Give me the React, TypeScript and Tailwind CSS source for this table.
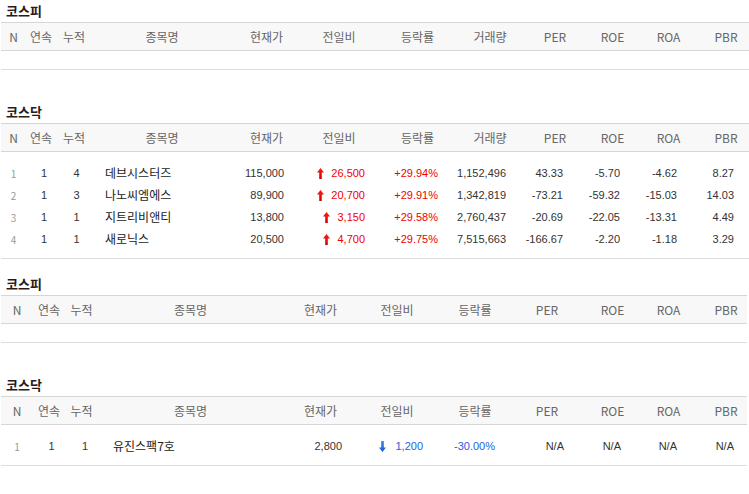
import type { ReactNode } from 'react';

type Stock = {
  n: number;
  streak: number;
  total: number;
  name: string;
  price: string;
  dir: 'up' | 'down';
  diff: string;
  rate: string;
  volume?: string;
  per: string;
  roe: string;
  roa: string;
  pbr: string;
};

type Col = {
  label: string;
  head: string;
  cell: string;
  render: (s: Stock) => ReactNode;
};

const num = "font-['Liberation_Sans',sans-serif] text-[11px]";

function UpArrow() {
  return (
    <svg width="7" height="11" viewBox="0 0 7 11" className="shrink-0">
      <defs>
        <linearGradient id="upg" x1="0" y1="0" x2="0" y2="1">
          <stop offset="0" stopColor="#ff1a1a" />
          <stop offset="1" stopColor="#d10000" />
        </linearGradient>
      </defs>
      <path d="M3.5 0 L7 4.5 H4.8 V11 H2.2 V4.5 H0 Z" fill="url(#upg)" />
    </svg>
  );
}

function DownArrow() {
  return (
    <svg width="7" height="11" viewBox="0 0 7 11" className="shrink-0">
      <defs>
        <linearGradient id="dng" x1="0" y1="0" x2="0" y2="1">
          <stop offset="0" stopColor="#3d86f0" />
          <stop offset="1" stopColor="#1558d0" />
        </linearGradient>
      </defs>
      <path d="M3.5 11 L7 6.5 H4.8 V0 H2.2 V6.5 H0 Z" fill="url(#dng)" />
    </svg>
  );
}

function Diff({ s }: { s: Stock }) {
  const up = s.dir === 'up';
  return (
    <span className={`inline-flex items-center ${up ? 'gap-[7px] text-[#f00000]' : 'gap-[9px] text-[#1a5fe0]'}`}>
      {up ? <UpArrow /> : <DownArrow />}
      <span className={num}>{s.diff}</span>
    </span>
  );
}

const rateColor = (s: Stock) => (s.dir === 'up' ? 'text-[#f00000]' : 'text-[#1a5fe0]');

const fullCols: Col[] = [
  { label: 'N', head: 'text-center', cell: 'justify-center', render: (s) => <span className="text-[10px] text-[#999]">{s.n}</span> },
  { label: '연속', head: 'text-center', cell: 'justify-center pl-[6px]', render: (s) => <span className={num}>{s.streak}</span> },
  { label: '누적', head: 'text-center', cell: 'justify-center pl-[5px]', render: (s) => <span className={num}>{s.total}</span> },
  { label: '종목명', head: 'text-center', cell: 'justify-start pl-[13px]', render: (s) => <span className="text-[12px] text-[#222]">{s.name}</span> },
  { label: '현재가', head: 'text-center', cell: 'justify-end pr-[17px]', render: (s) => <span className={num}>{s.price}</span> },
  { label: '전일비', head: 'text-center', cell: 'justify-end pr-[12px]', render: (s) => <Diff s={s} /> },
  { label: '등락률', head: 'text-center', cell: 'justify-end pr-[20px]', render: (s) => <span className={`${num} ${rateColor(s)}`}>{s.rate}</span> },
  { label: '거래량', head: 'text-center', cell: 'justify-end pr-[16px]', render: (s) => <span className={num}>{s.volume}</span> },
  { label: 'PER', head: 'text-center', cell: 'justify-end pr-[25px]', render: (s) => <span className={num}>{s.per}</span> },
  { label: 'ROE', head: 'text-center', cell: 'justify-end pr-[17px]', render: (s) => <span className={num}>{s.roe}</span> },
  { label: 'ROA', head: 'text-center', cell: 'justify-end pr-[23px]', render: (s) => <span className={num}>{s.roa}</span> },
  { label: 'PBR', head: 'text-center pl-[3px]', cell: 'justify-end pr-[15px]', render: (s) => <span className={num}>{s.pbr}</span> },
];

const shortCols: Col[] = [
  { label: 'N', head: 'text-center', cell: 'justify-center', render: (s) => <span className="text-[10px] text-[#999]">{s.n}</span> },
  { label: '연속', head: 'text-center', cell: 'justify-center pl-[5px]', render: (s) => <span className={num}>{s.streak}</span> },
  { label: '누적', head: 'text-center', cell: 'justify-center pl-[7px]', render: (s) => <span className={num}>{s.total}</span> },
  { label: '종목명', head: 'text-center', cell: 'justify-start pl-[15px]', render: (s) => <span className="text-[12px] text-[#222]">{s.name}</span> },
  { label: '현재가', head: 'text-center', cell: 'justify-end pr-[16px]', render: (s) => <span className={num}>{s.price}</span> },
  { label: '전일비', head: 'text-center', cell: 'justify-end pr-[13px]', render: (s) => <Diff s={s} /> },
  { label: '등락률', head: 'text-center', cell: 'justify-end pr-[19px]', render: (s) => <span className={`${num} ${rateColor(s)}`}>{s.rate}</span> },
  { label: 'PER', head: 'text-center', cell: 'justify-end pr-[16px]', render: (s) => <span className={num}>{s.per}</span> },
  { label: 'ROE', head: 'text-center', cell: 'justify-end pr-[24px]', render: (s) => <span className={num}>{s.roe}</span> },
  { label: 'ROA', head: 'text-center', cell: 'justify-end pr-[15px]', render: (s) => <span className={num}>{s.roa}</span> },
  { label: 'PBR', head: 'text-center pl-[13px]', cell: 'justify-end pr-[13px]', render: (s) => <span className={num}>{s.pbr}</span> },
];

const fullGrid = 'grid-cols-[25px_30px_36px_140px_69px_76px_81px_64px_66px_49px_63px_49px]';
const shortGrid = 'grid-cols-[32px_32px_33px_185px_75px_78px_78px_66px_65px_47px_55px]';

const kosdaqUp: Stock[] = [
  { n: 1, streak: 1, total: 4, name: '데브시스터즈', price: '115,000', dir: 'up', diff: '26,500', rate: '+29.94%', volume: '1,152,496', per: '43.33', roe: '-5.70', roa: '-4.62', pbr: '8.27' },
  { n: 2, streak: 1, total: 3, name: '나노씨엠에스', price: '89,900', dir: 'up', diff: '20,700', rate: '+29.91%', volume: '1,342,819', per: '-73.21', roe: '-59.32', roa: '-15.03', pbr: '14.03' },
  { n: 3, streak: 1, total: 1, name: '지트리비앤티', price: '13,800', dir: 'up', diff: '3,150', rate: '+29.58%', volume: '2,760,437', per: '-20.69', roe: '-22.05', roa: '-13.31', pbr: '4.49' },
  { n: 4, streak: 1, total: 1, name: '새로닉스', price: '20,500', dir: 'up', diff: '4,700', rate: '+29.75%', volume: '7,515,663', per: '-166.67', roe: '-2.20', roa: '-1.18', pbr: '3.29' },
];

const kosdaqDown: Stock[] = [
  { n: 1, streak: 1, total: 1, name: '유진스팩7호', price: '2,800', dir: 'down', diff: '1,200', rate: '-30.00%', per: 'N/A', roe: 'N/A', roa: 'N/A', pbr: 'N/A' },
];

function Section({ title, cols, grid, rows, width, className }: { title: string; cols: Col[]; grid: string; rows: Stock[]; width: string; className?: string }) {
  return (
    <section className={`${width} ${className ?? ''}`}>
      <h3 className="h-[22px] pl-[5px] pt-[3px] text-[13px] font-bold leading-[16px] text-[#2a1a1a]">{title}</h3>
      <div className={`grid ${grid} h-[29px] items-center border-y border-[#d6d6d6] bg-[#f8f8f8] text-[12px] text-[#666]`}>
        {cols.map((c) => (
          <div key={c.label} className={c.head}>{c.label}</div>
        ))}
      </div>
      <div className={`border-b border-[#dedede] ${rows.length ? 'pt-[10px] pb-[8px]' : 'h-[19px]'}`}>
        {rows.map((s) => (
          <div key={s.name} className={`grid ${grid} h-[22px] items-center text-[#333]`}>
            {cols.map((c) => (
              <div key={c.label} className={`flex items-center ${c.cell}`}>{c.render(s)}</div>
            ))}
          </div>
        ))}
      </div>
    </section>
  );
}

export default function App() {
  return (
    <div className="min-h-[494px] bg-white pl-[1px] font-['Noto_Sans_CJK_KR',sans-serif]">
      <Section title="코스피" cols={fullCols} grid={fullGrid} rows={[]} width="w-[748px]" />
      <Section title="코스닥" cols={fullCols} grid={fullGrid} rows={kosdaqUp} width="w-[748px]" className="mt-[31px]" />
      <Section title="코스피" cols={shortCols} grid={shortGrid} rows={[]} width="w-[746px]" className="mt-[14px]" />
      <Section title="코스닥" cols={shortCols} grid={shortGrid} rows={kosdaqDown} width="w-[746px]" className="mt-[31px]" />
    </div>
  );
}
